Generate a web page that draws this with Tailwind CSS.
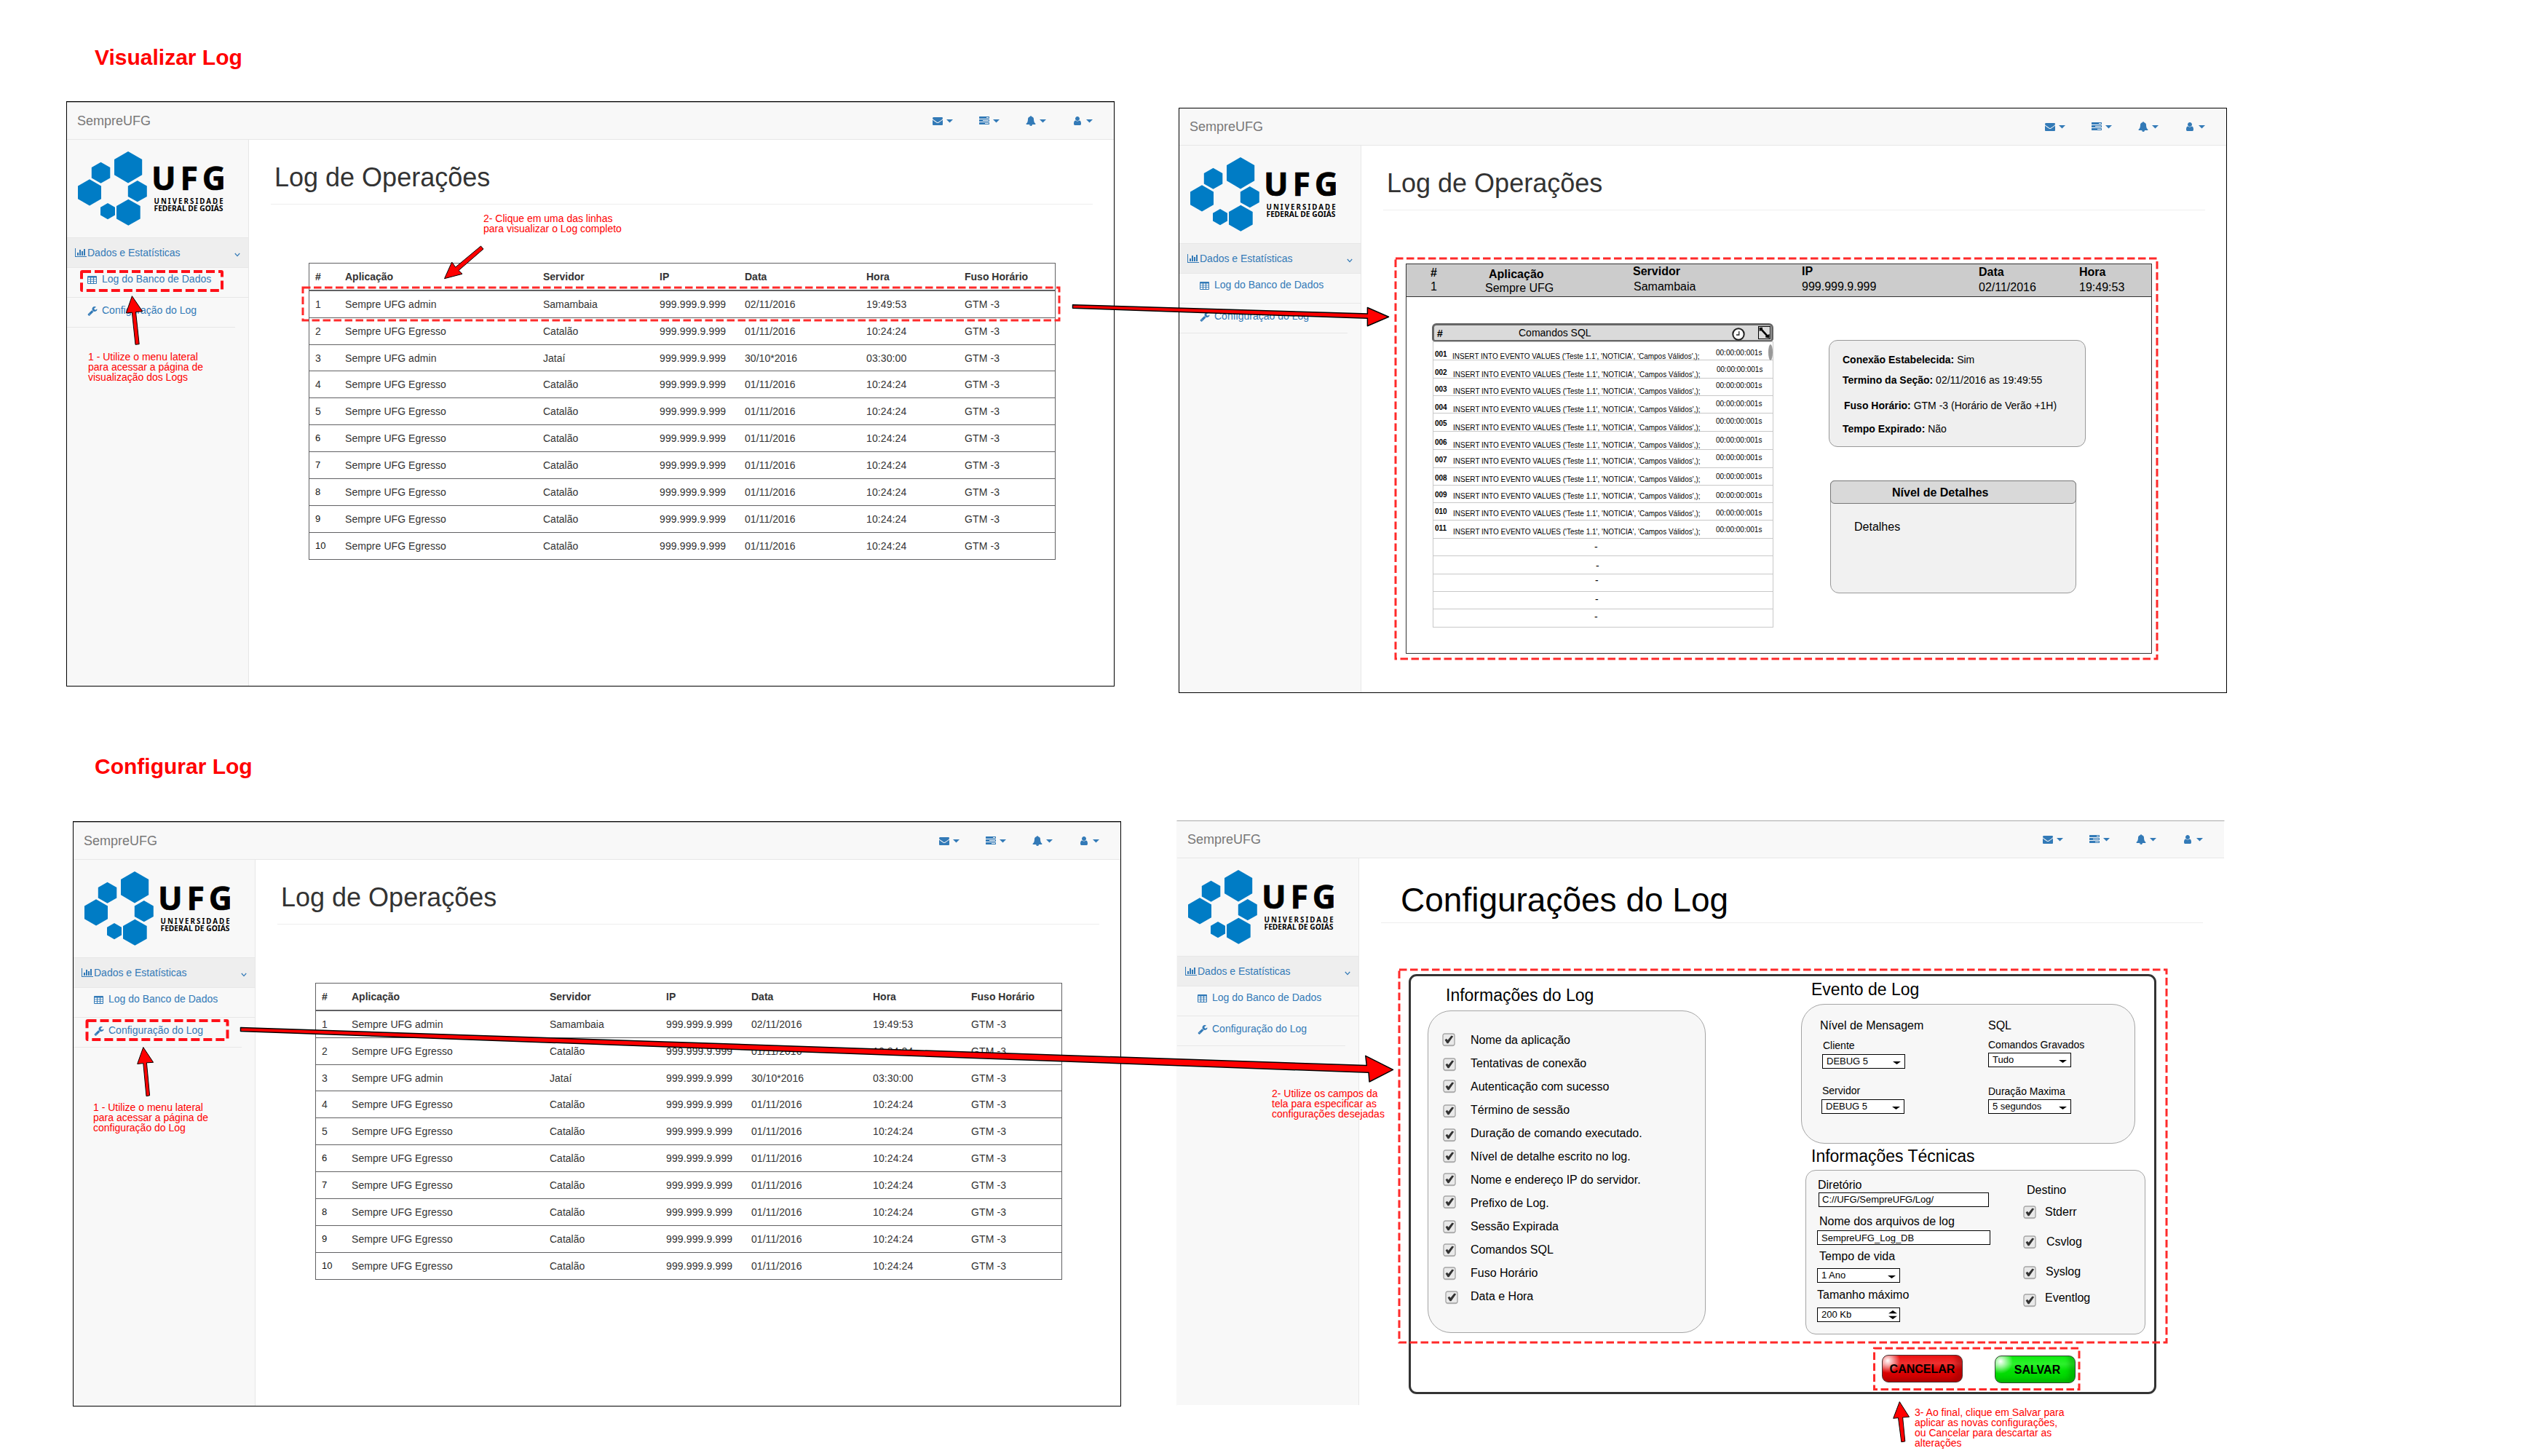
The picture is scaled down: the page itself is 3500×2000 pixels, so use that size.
<!DOCTYPE html>
<html lang="pt-BR">
<head>
<meta charset="utf-8">
<title>SempreUFG - Log</title>
<script src="https://cdn.jsdelivr.net/npm/@tailwindcss/browser@4"></script>
</head>
<body class="relative h-[2000px] w-[3500px] overflow-hidden bg-white font-['Liberation_Sans',Arial,sans-serif] text-sm leading-5 text-[#333]">

<!-- Icon sprite -->
<svg class="hidden" aria-hidden="true">
  <symbol id="i-envelope" viewBox="0 0 1792 1792"><path d="M1792 710v794q0 66-47 113t-113 47h-1472q-66 0-113-47t-47-113v-794q44 49 101 87 362 246 497 345 57 42 92.500 65.500t94.500 48 110 24.500h2q51 0 110-24.500t94.500-48 92.500-65.500q170-123 498-345 57-39 100-87zm0-294q0 79-49 151t-122 123q-376 261-468 325-10 7-42.500 31t-54 38.500-52 32.500-57.500 27-50 9h-2q-23 0-50-9t-57.500-27-52-32.500-54-38.500-42.500-31q-91-64-262-182.500t-205-142.500q-62-42-117-115.500t-55-136.500q0-78 41.500-130t118.500-52h1472q65 0 112.500 47t47.500 113z"/></symbol>
  <symbol id="i-tasks" viewBox="0 0 1792 1792"><path d="M1024 1408h640v-128h-640v128zm-384-512h1024v-128h-1024v128zm640-512h384v-128h-384v128zm512 832v256q0 26-19 45t-45 19h-1664q-26 0-45-19t-19-45v-256q0-26 19-45t45-19h1664q26 0 45 19t19 45zm0-512v256q0 26-19 45t-45 19h-1664q-26 0-45-19t-19-45v-256q0-26 19-45t45-19h1664q26 0 45 19t19 45zm0-512v256q0 26-19 45t-45 19h-1664q-26 0-45-19t-19-45v-256q0-26 19-45t45-19h1664q26 0 45 19t19 45z"/></symbol>
  <symbol id="i-bell" viewBox="0 0 1792 1792"><path d="M912 1696q0-16-16-16-59 0-101.500-42.500t-42.500-101.500q0-16-16-16t-16 16q0 73 51.500 124.500t124.500 51.500q16 0 16-16zm816-288q0 52-38 90t-90 38h-448q0 106-75 181t-181 75-181-75-75-181h-448q-52 0-90-38t-38-90q50-42 91-88t85-119.500 74.500-158.500 50-206 19.500-260q0-152 117-282.500t307-158.500q-8-19-8-39 0-40 28-68t68-28 68 28 28 68q0 20-8 39 190 28 307 158.500t117 282.500q0 139 19.500 260t50 206 74.500 158.500 85 119.500 91 88z"/></symbol>
  <symbol id="i-user" viewBox="0 0 1792 1792"><path d="M1536 1399q0 109-62.500 187t-150.500 78h-854q-88 0-150.500-78t-62.500-187q0-85 8.500-160.500t31.500-152 58.500-131 94-89 134.500-34.500q131 128 313 128t313-128q76 0 134.500 34.500t94 89 58.500 131 31.500 152 8.500 160.500zm-256-887q0 159-112.500 271.500t-271.500 112.500-271.500-112.500-112.500-271.500 112.500-271.500 271.500-112.500 271.500 112.500 112.500 271.500z"/></symbol>
  <symbol id="i-wrench" viewBox="0 0 1792 1792"><path d="M448 1472q0-26-19-45t-45-19-45 19-19 45 19 45 45 19 45-19 19-45zm644-420l-682 682q-37 37-90 37-52 0-91-37l-106-108q-38-36-38-90 0-53 38-91l681-681q39 98 114.500 173.500t173.500 114.500zm634-435q0 39-23 106-47 134-164.500 217.500t-258.500 83.500q-185 0-316.500-131.500t-131.500-316.500 131.500-316.500 316.500-131.500q58 0 121.500 16.500t107.500 46.500q16 11 16 28t-16 28l-293 169v224l193 107q5-3 79-48.500t135.500-81 70.500-35.500q15 0 23.500 10t8.500 25z"/></symbol>
  <symbol id="i-chart" viewBox="0 0 2048 1792"><path d="M640 896v512h-256v-512h256zm384-512v1024h-256v-1024h256zm1024 1152v128h-2048v-1536h128v1408h1920zm-640-896v768h-256v-768h256zm384-384v1152h-256v-1152h256z"/></symbol>
  <symbol id="i-table" viewBox="0 0 13 11"><path fill-rule="evenodd" d="M1 0h11q1 0 1 1v9q0 1-1 1H1q-1 0-1-1V1q0-1 1-1zM1 2.500v2h3v-2zM5 2.500v2h3v-2zM9 2.500v2h3v-2zM1 5.300v2h3v-2zM5 5.300v2h3v-2zM9 5.300v2h3v-2zM1 8.100v2h3v-2zM5 8.100v2h3v-2zM9 8.100v2h3v-2z"/></symbol>
  <symbol id="i-check" viewBox="0 0 18 19">
    <rect x=".8" y="1.600" width="16.400" height="16.600" rx="3" fill="#c4c4c4"/>
    <rect x="1" y="1" width="16" height="16" rx="2.500" fill="#e9e9e9" stroke="#a5a5a5" stroke-width="1.300"/>
    <path d="M3.600 9.500 5.800 7.800 7.600 9.800 12.600 3.400 15.200 4.600 8.400 14.200 6.600 14.200Z" fill="#333"/>
  </symbol>
  <symbol id="logo" viewBox="0 0 200 104">
    <g fill="#007cc5">
      <path d="M69 0 88.200 11V32.300L69 43.400 50 32.300V11Z"/>
      <path d="M31.500 14.700 44.300 22V36.500L31.500 43.800 18.800 36.500V22Z"/>
      <path d="M16 38.300 32 47.500V65.200L16 74.400 0 65.200V47.500Z"/>
      <path d="M81.800 40 94.800 47.500V62L81.800 69.300 68.800 62V47.500Z"/>
      <path d="M41 71 51 76.700V87.600L41 93.200 31 87.600V76.700Z"/>
      <path d="M69.300 65.700 85.700 75V92.600L69.300 101.800 53 92.600V75Z"/>
    </g>
    <g fill="#000" font-family="'Noto Sans','Open Sans',sans-serif" font-weight="700">
      <text transform="translate(101 52.700)" font-size="44.500" textLength="102" lengthAdjust="spacing" stroke="#000" stroke-width=".7">UFG</text>
      <text transform="translate(104.500 71.500) scale(.92 1)" font-size="10.600" textLength="103.500" lengthAdjust="spacing">UNIVERSIDADE</text>
      <text transform="translate(104.500 82)" font-size="10.600" textLength="95" lengthAdjust="spacingAndGlyphs">FEDERAL DE GOIÁS</text>
    </g>
  </symbol>
</svg>

<h2 class="absolute left-[130px] top-[62px] text-[30px] leading-[34px] font-bold text-[#f00]">Visualizar Log</h2>
<h2 class="absolute left-[130px] top-[1036px] text-[30px] leading-[34px] font-bold text-[#f00]">Configurar Log</h2>

<!-- Four screens placed on the flow canvas -->
<section id="w1" class="absolute left-[91px] top-[139px] flex h-[804px] w-[1440px] flex-col border border-black bg-white"></section>
<section id="w2" class="absolute left-[1619px] top-[148px] flex h-[804px] w-[1440px] flex-col border border-black bg-white"></section>
<section id="w3" class="absolute left-[100px] top-[1128px] flex h-[804px] w-[1440px] flex-col border border-black bg-white"></section>
<section id="w4" class="absolute left-[1616px] top-[1127px] flex h-[804px] w-[1440px] flex-col border border-t-[#aaa] border-r-white border-b-white border-l-[#f8f8f8] bg-white"></section>

<!-- Call-outs -->
<p class="absolute left-[664px] top-[293px] text-sm leading-[14px] whitespace-nowrap text-[#f00]">2- Clique em uma das linhas<br>para visualizar o Log completo</p>
<p class="absolute left-[121px] top-[483px] text-sm leading-[14px] whitespace-nowrap text-[#f00]">1 - Utilize o menu lateral<br>para acessar a página de<br>visualização dos Logs</p>
<p class="absolute left-[128px] top-[1514px] text-sm leading-[14px] whitespace-nowrap text-[#f00]">1 - Utilize o menu lateral<br>para acessar a página de<br>configuração do Log</p>
<p class="absolute left-[1747px] top-[1495px] text-sm leading-[14px] whitespace-nowrap text-[#f00]">2- Utilize os campos da<br>tela para especificar as<br>configurações desejadas</p>
<p class="absolute left-[2630px] top-[1933px] text-sm leading-[14px] whitespace-nowrap text-[#f00]">3- Ao final, clique em Salvar para<br>aplicar as novas configurações,<br>ou Cancelar para descartar as<br>alterações</p>

<!-- Highlight frames and arrows -->
<svg class="pointer-events-none absolute left-0 top-0 h-[2000px] w-[3500px]" viewBox="0 0 3500 2000">
  <g fill="none" stroke="#ff1018" stroke-width="4" stroke-dasharray="12 5">
    <rect x="112" y="373" width="193" height="26" rx="1"/>
    <rect x="119.500" y="1402" width="193" height="26" rx="1"/>
  </g>
  <g fill="none" stroke="#ff2a2a" stroke-width="3" stroke-dasharray="10.500 4.500">
    <rect x="416" y="395" width="1039" height="45"/>
    <rect x="1917" y="355" width="1046" height="550"/>
    <rect x="1922" y="1332" width="1054" height="512"/>
    <rect x="2574.500" y="1852" width="281.500" height="56.500"/>
  </g>
  <g fill="#f00" stroke="#000" stroke-width="1" stroke-linejoin="round">
    <path d="M610.500 382.700 620.700 360 625.700 367 660.500 338 664 342 630 371.500 635 376.300Z"/>
    <path d="M181.400 406.700 173.300 430 181.400 429.200 186 473.300 191.200 472.700 186.500 428.500 195.700 427.700Z"/>
    <path d="M196.800 1438.600 188.700 1461.400 196.800 1460.600 201 1505.700 205.600 1504.800 201.400 1459.800 210.600 1459.300Z"/>
    <path d="M2609.300 1925.500 2600.700 1948.300 2607.500 1947.600 2611.800 1980.700 2616.800 1979.900 2613.600 1947 2622.500 1946.300Z"/>
    <path d="M1473.500 418.700 1878.400 431 1878.400 422.500 1907.500 435.300 1878.400 447.700 1878.400 437.300 1473.500 423.300Z" stroke-width="1.500"/>
    <path d="M330.500 1411.500 1877.300 1463.500 1875.800 1450.300 1913.500 1469.300 1881 1486 1880 1473.300 330.500 1416.500Z" stroke-width="1.500"/>
  </g>
</svg>

<script>
const icon = (id, cls) => `<svg class="${cls}"><use href="#${id}"/></svg>`;
const caret = `<svg class="h-[5px] w-[9px] fill-[#337ab7]" viewBox="0 0 9 5"><path d="M0 0h9L4.500 4.500Z"/></svg>`;

const shell = (main, topLine) => `
  ${topLine ? '<div class="h-px shrink-0 bg-[#aaa]"></div>' : ''}
  <header class="flex h-[51px] shrink-0 items-center justify-between border-b border-[#e7e7e7] bg-[#f8f8f8] pl-3.5 pr-[29px]">
    <span class="text-lg leading-5 text-[#777]">SempreUFG</span>
    <nav class="flex gap-9">
      ${['i-envelope', 'i-tasks', 'i-bell', 'i-user'].map(i => `<span class="flex items-center gap-[5px]">${icon(i, 'size-3.5 fill-[#337ab7]')}${caret}</span>`).join('')}
    </nav>
  </header>
  <div class="flex min-h-0 grow">
    <aside class="flex w-[250px] shrink-0 flex-col border-r border-[#e7e7e7] bg-[#f8f8f8] text-[#337ab7]">
      <div class="h-[134px] pl-[15px] pt-4">${icon('logo', 'h-[104px] w-[200px] overflow-visible')}</div>
      <a class="flex h-[41px] items-center border-t border-[#e7e7e7] bg-[#eee] pl-[11px] pr-[11px]">
        ${icon('i-chart', 'h-3.5 w-4 fill-[#337ab7]')}<span class="pl-px">Dados e Estatísticas</span>
        <svg class="mt-1.5 ml-auto h-[6px] w-2" viewBox="0 0 8 6"><path d="M.8 1 4 4.600 7.200 1" fill="none" stroke="#337ab7" stroke-width="1.200"/></svg>
      </a>
      <a class="flex h-[41px] items-start border-t border-[#e7e7e7] pt-[5px] pl-7">
        ${icon('i-table', 'mt-[6px] h-[11px] w-[13px] fill-[#337ab7]')}<span class="pl-[7px]">Log do Banco de Dados</span>
      </a>
      <a class="flex h-[41px] items-start border-t border-[#e7e7e7] pt-[7px] pl-7">
        ${icon('i-wrench', 'mt-1 size-3.5 fill-[#337ab7]')}<span class="pl-1.5">Configuração do Log</span>
      </a>
      <div class="mr-[18px] h-px bg-[#e7e7e7]"></div>
    </aside>
    <main class="flex min-w-0 grow flex-col">${main}</main>
  </div>`;

const pageTitle = `<h1 class="mr-[29px] ml-[30px] h-[89px] shrink-0 border-b border-[#eee] pt-8 pl-[5px] text-4xl leading-10">Log de Operações</h1>`;

/* Operations table */
const rows = [
  ['Sempre UFG admin', 'Samambaia', '02/11/2016', '19:49:53'],
  ['Sempre UFG Egresso', 'Catalão', '01/11/2016', '10:24:24'],
  ['Sempre UFG admin', 'Jataí', '30/10*2016', '03:30:00'],
  ...Array(7).fill(['Sempre UFG Egresso', 'Catalão', '01/11/2016', '10:24:24'])
];
const cols = 'grid grid-cols-[41px_272px_160px_117px_167px_135px_1fr] pl-2';
const opsTable = `
  <div class="mt-20 ml-[82px] flex w-[1026px] flex-col border border-[#616163]">
    <div class="${cols} h-[38px] border-b-2 border-[#616163] pt-2 font-bold">
      ${['#', 'Aplicação', 'Servidor', 'IP', 'Data', 'Hora', 'Fuso Horário'].map(t => `<span>${t}</span>`).join('')}
    </div>
    ${rows.map((r, i) => `<div class="${cols} ${i === 2 ? 'h-9' : i === 9 ? 'h-9' : 'h-[37px]'} ${i < 9 ? 'border-b' : ''} border-[#616163] pt-2">
      <span class="${i > 4 ? 'text-[13px] text-[#111]' : ''}">${i + 1}</span><span class="tracking-[0.07px]">${r[0]}</span><span>${r[1]}</span><span class="tracking-[0.13px]">999.999.9.999</span><span class="tracking-[0.05px]">${r[2]}</span><span class="tracking-[0.1px]">${r[3]}</span><span class="tracking-[0.1px]">GTM -3</span>
    </div>`).join('')}
  </div>`;

/* Log detail screen */
const sql = "INSERT INTO EVENTO VALUES ('Teste 1.1', 'NOTICIA', 'Campos Válidos',);";
const lineY = [469, 494, 519, 543, 567, 592, 617, 642, 666, 690, 714, 739, 763, 788, 812, 836, 861];
const numY = [490, 515, 538, 563, 585, 611, 635, 660, 683, 706, 729];
const sqlY = [493.500, 518.500, 541.500, 566.500, 591.500, 615.500, 637.500, 662.500, 685.500, 709.500, 734.500];
const timeY = [488, 511, 533, 558, 582, 608, 632, 658, 684, 708, 731];
const dashes = [[2190, 751], [2192, 777], [2191, 797], [2191, 823], [2190, 847]];
const sqlRows = lineY.slice(0, 16).map((y, i) => {
  const h = lineY[i + 1] - y;
  const m = b => `margin-top:${b - y - 10.500}px`;
  return `<div class="flex items-start border-b border-[#c8c8c8] text-[10px] leading-3 whitespace-nowrap text-black" style="height:${h}px">` + (i < 11
    ? `<b class="w-[24px] pl-0.5" style="${m(numY[i])}">${String(i + 1).padStart(3, '0')}</b><span class="w-[362px] ${i ? 'pl-[3px]' : 'pl-0.5'}" style="${m(sqlY[i])}">${sql}</span><span class="${i === 1 ? 'pl-[3px]' : 'pl-0.5'}" style="${m(timeY[i])}">00:00:00:001s</span>${i ? '' : '<i class="mt-[3px] ml-auto h-[22px] w-1.5 rounded-[50%] bg-[#999]"></i>'}`
    : `<span class="text-sm leading-4" style="margin:${dashes[i - 11][1] - y - 9.500}px 0 0 ${dashes[i - 11][0] - 1969}px">-</span>`) + `</div>`;
}).join('');

const head = (cls, a, b, la, lb) => `<div class="${cls}"><b class="block ${la || ''}">${a}</b><span class="block ${lb || ''}">${b}</span></div>`;
const detail = pageTitle + `
  <div class="mt-[73px] ml-[61px] flex h-[536px] w-[1025px] flex-col border border-[#333] text-black">
    <div class="grid h-[45px] shrink-0 grid-cols-[75px_203px_232px_243px_138px_1fr] border-b border-[#333] bg-[#ccc] pl-[33px] text-base">
      ${head('pt-0.5 leading-[19px]', '#', '1')}
      ${head('pt-1 leading-[19px]', 'Aplicação', 'Sempre UFG', 'pl-[5px]')}
      ${head('-mt-px leading-[21px]', 'Servidor', 'Samambaia', '', 'pl-px')}
      ${head('-mt-px leading-[21px]', 'IP', '999.999.9.999')}
      ${head('leading-[21px]', 'Data', '02/11/2016')}
      ${head('leading-[21px]', 'Hora', '19:49:53')}
    </div>
    <div class="flex">
      <div class="mt-9 ml-[35px] w-[469px]">
        <div class="flex h-[25px] items-start rounded-t-md rounded-b border-3 border-b-2 border-[#666] bg-[#dadada] pl-1">
          <b class="mt-[1px] w-[112px]">#</b><span class="w-[293px]">Comandos SQL</span>
          <svg class="mt-[3px] size-[18px]" viewBox="0 0 18 18"><circle cx="9" cy="9" r="7.700" fill="#fff" stroke="#222" stroke-width="2"/><path d="M9.800 5V10H6" fill="none" stroke="#222" stroke-width="1.300"/></svg>
          <svg class="mt-px ml-[18px] h-[18px] w-[17px]" viewBox="0 0 17 18"><rect x=".5" y=".5" width="16" height="17" fill="#dadada" stroke="#000"/><path d="M1.500 2 6 1.800 6 4.200 13 12 15.500 11 15.500 16.500 10 15.500 10.500 13 4 6 1.800 7Z"/></svg>
        </div>
        <div class="ml-px border-x border-t border-[#c8c8c8]">${sqlRows}</div>
      </div>
      <div class="mt-[59px] ml-[76px] flex flex-col">
        <div class="flex h-[147px] w-[353px] flex-col rounded-xl border-[1.5px] border-[#999] bg-[#efefef] pt-4 pl-[18px]">
          <p><b>Conexão Estabelecida:</b> Sim</p>
          <p class="mt-2"><b>Termino da Seção:</b> 02/11/2016 as 19:49:55</p>
          <p class="mt-[15px] pl-0.5"><b>Fuso Horário:</b> GTM -3 (Horário de Verão +1H)</p>
          <p class="mt-3"><b>Tempo Expirado:</b> Não</p>
        </div>
        <div class="mt-[46px] ml-0.5 h-[155px] w-[338px] rounded-t-md rounded-b-xl border-[1.5px] border-[#999] bg-[#f1f1f1] text-base leading-5">
          <div class="-mx-px -mt-px h-8 rounded-md border border-[#777] bg-[#d9d9d9] pt-[6px] pl-[84px] font-bold">Nível de Detalhes</div>
          <p class="mt-[22px] pl-8">Detalhes</p>
        </div>
      </div>
    </div>
  </div>`;

/* Settings screen */
const options = [['Nome da aplicação', 6], ['Tentativas de conexão', 8], ['Autenticação com sucesso', 6], ['Término de sessão', 7.500], ['Duração de comando executado.', 9], ['Nível de detalhe escrito no log.', 6], ['Nome e endereço IP do servidor.', 6], ['Prefixo de Log.', 5], ['Sessão Expirada', 7], ['Comandos SQL', 7], ['Fuso Horário', 7], ['Data e Hora', 8]];
const check = icon('i-check', 'h-[19px] w-[18px] shrink-0');
const select = (cls, t) => `<div class="${cls} flex h-5 w-[114px] items-center justify-between border border-black bg-white pr-[5px] pl-[5px] text-[13px] leading-[18px]"><span class="-mt-px">${t}</span><svg class="mt-[3px] h-1 w-[11px]" viewBox="0 0 11 4"><path d="M0 0h11L5.500 4Z"/></svg></div>`;
const settings = `
  <h1 class="mr-[29px] ml-[30px] h-[89px] shrink-0 border-b border-[#eee] pt-[31px] pl-[27px] text-[46px] leading-[52px] text-black">Configurações do Log</h1>
  <div class="mt-[70px] ml-[68px] flex h-[577px] w-[1027px] shrink-0 rounded-[11px] border-3 border-[#333] text-base leading-5 text-black">
    <div class="ml-[23px] flex flex-col pt-3">
      <h2 class="pl-[25px] text-[23px] leading-7">Informações do Log</h2>
      <div class="mt-[7px] h-[443px] w-[382px] rounded-[32px] border-[1.5px] border-[#a5a5a5] bg-[#f7f7f7] pt-6 pl-[19px]">
        ${options.map(([t, y], i) => `<div class="grid h-8 grid-cols-[39px_1fr] leading-8"><span class="${i === 0 ? '' : i === 11 ? 'pl-1' : 'pl-px'}" style="padding-top:${y}px">${check}</span><span>${t}</span></div>`).join('')}
      </div>
    </div>
    <div class="ml-[131px] flex flex-col pt-1">
      <h2 class="pl-3.5 text-[23px] leading-7">Evento de Log</h2>
      <div class="mt-1.5 flex h-[192px] w-[459px] rounded-[32px] border-[1.5px] border-[#a5a5a5] bg-[#f7f7f7] pt-[19px] pl-6 text-sm leading-5">
        <div class="w-[231px]">
          <h3 class="pl-px text-base leading-5">Nível de Mensagem</h3>
          <p class="mt-[7px] pl-[5px]">Cliente</p>${select('mt-0.5 ml-1', 'DEBUG 5')}
          <p class="mt-5 pl-1">Servidor</p>${select('mt-0.5 ml-[3px]', 'DEBUG 5')}
        </div>
        <div class="pl-px">
          <h3 class="text-base leading-5">SQL</h3>
          <p class="mt-1.5">Comandos Gravados</p>${select('mt-px', 'Tudo')}
          <p class="mt-[23px]">Duração Maxima</p>${select('mt-px', '5 segundos')}
        </div>
      </div>
      <h2 class="mt-[3px] pl-3.5 text-[23px] leading-7">Informações Técnicas</h2>
      <div class="mt-[5px] ml-1.5 flex h-[226px] w-[467px] rounded-[14px] border-[1.5px] border-[#a5a5a5] bg-[#f7f7f7]">
        <div class="w-[298px] pt-[10px] pl-[15px]">
          <p class="pl-px">Diretório</p>
          <div class="ml-0.5 h-5 w-[234px] border border-black bg-white pl-1 text-[13px] leading-[18px]">C://UFG/SempreUFG/Log/</div>
          <p class="mt-[10px] pl-[3px]">Nome dos arquivos de log</p>
          <div class="mt-0.5 h-5 w-[238px] border border-black bg-white pt-px pl-[5px] text-[13px] leading-[18px]">SempreUFG_Log_DB</div>
          <p class="mt-1.5 pl-[3px]">Tempo de vida</p>${select('mt-1.5', '1 Ano')}
          <p class="mt-[7px]">Tamanho máximo</p>
          <div class="mt-[7px] flex h-5 w-[114px] items-center justify-between border border-black bg-white pr-[3px] pl-[5px] text-[13px] leading-[18px]"><span>200 Kb</span><svg class="h-3 w-[12px]" viewBox="0 0 12 12"><path d="M0 4.200h12L6 0ZM0 7.800h12L6 12Z"/></svg></div>
        </div>
        <div class="pt-[17px]">
          <p class="pl-[5px]">Destino</p>
          <div class="mt-2.5 flex h-[41px] items-start gap-3 leading-5"><span class="pt-px">${check}</span><span>Stderr</span></div>
          <div class="flex h-[41px] items-start gap-3"><span class="pt-px">${check}</span><span class="pl-0.5">Csvlog</span></div>
          <div class="flex h-[36px] items-start gap-3"><span class="pt-0.5">${check}</span><span class="pl-px">Syslog</span></div>
          <div class="flex items-start gap-3"><span class="pt-1">${check}</span><span>Eventlog</span></div>
        </div>
      </div>
      <div class="mt-7 ml-[111px] flex items-start gap-11 font-bold">
        <button class="h-[38px] w-[111px] rounded-[9px] border border-[#433] bg-[radial-gradient(circle_at_7px_7px,#fff_0,rgba(255,255,255,.75)_4px,rgba(255,255,255,0)_17px),linear-gradient(#f01010,#ec3030_30%,#df0303_55%,#c80000)] pt-0.5 font-bold shadow-[inset_-8px_-3px_6px_rgba(120,0,0,.35)]">CANCELAR</button>
        <button class="mt-px h-[38px] w-[111px] rounded-[9px] border border-[#343] bg-[radial-gradient(circle_at_7px_7px,#fff_0,rgba(255,255,255,.75)_4px,rgba(255,255,255,0)_17px),linear-gradient(#0fee0f,#2df02d_30%,#03e003_55%,#00cc00)] pt-0.5 pl-1.5 font-bold shadow-[inset_-8px_-3px_6px_rgba(0,120,0,.35)]">SALVAR</button>
      </div>
    </div>
  </div>`;

document.getElementById('w1').innerHTML = shell(pageTitle + opsTable, true);
document.getElementById('w2').innerHTML = shell(detail, false);
document.getElementById('w3').innerHTML = shell(pageTitle + opsTable, true);
document.getElementById('w4').innerHTML = shell(settings, false);
</script>
</body>
</html>
